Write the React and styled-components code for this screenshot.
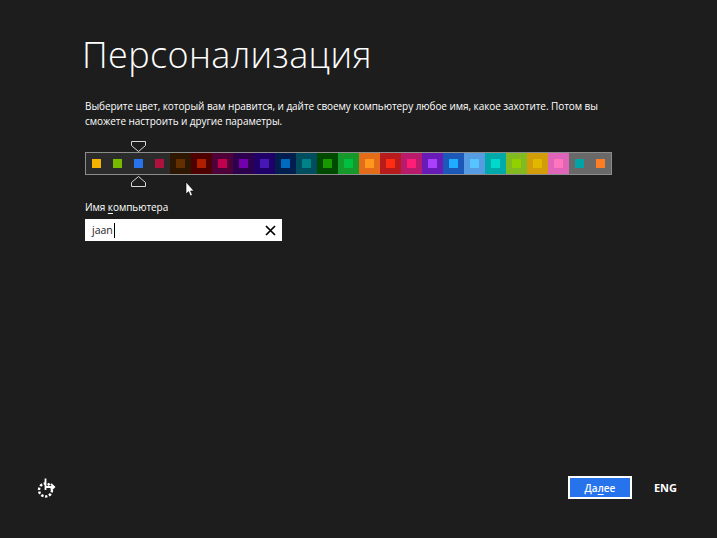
import React from "react";
import styled, { createGlobalStyle } from "styled-components";

const GlobalStyle = createGlobalStyle`
  html, body {
    margin: 0;
    padding: 0;
    background: #1d1d1d;
  }
`;

const SWATCHES = [
  { bg: "#2b2b2b", fg: "#f4b300" },
  { bg: "#2b2b2b", fg: "#78ba00" },
  { bg: "#2b2b2b", fg: "#2673ec", selected: true },
  { bg: "#2b2b2b", fg: "#ae113d" },
  { bg: "#2e1700", fg: "#632f00" },
  { bg: "#4e0000", fg: "#b01e00" },
  { bg: "#4e0038", fg: "#c1004f" },
  { bg: "#2d004e", fg: "#7200ac" },
  { bg: "#1f0068", fg: "#4617b4" },
  { bg: "#001e4e", fg: "#006ac1" },
  { bg: "#004d60", fg: "#008287" },
  { bg: "#004a00", fg: "#199900" },
  { bg: "#15992a", fg: "#00c13f" },
  { bg: "#e56c19", fg: "#ff981d" },
  { bg: "#b81b1b", fg: "#ff2e12" },
  { bg: "#b81b6c", fg: "#ff1d77" },
  { bg: "#691bb8", fg: "#aa40ff" },
  { bg: "#1b58b8", fg: "#1faeff" },
  { bg: "#569ce3", fg: "#56c5ff" },
  { bg: "#00aaaa", fg: "#00d8cc" },
  { bg: "#83ba1f", fg: "#91d100" },
  { bg: "#d39d09", fg: "#e1b700" },
  { bg: "#e064b7", fg: "#ff76bc" },
  { bg: "#696969", fg: "#00a4a4" },
  { bg: "#696969", fg: "#ff7d23" },
];

const Page = styled.div`
  box-sizing: border-box;
  width: 717px;
  height: 538px;
  display: flex;
  flex-direction: column;
  justify-content: space-between;
  padding: 33px 40px 39px 36px;
  background: #1d1d1d;
  color: #fff;
  font-family: "Open Sans", "Liberation Sans", sans-serif;
  overflow: hidden;
`;

const Content = styled.div`
  display: flex;
  flex-direction: column;
  padding-left: 49px;
`;

const Title = styled.h1`
  margin: 0 0 0 -3px;
  font-size: 36px;
  line-height: 44px;
  font-weight: 300;
  letter-spacing: 0.35px;
`;

const Intro = styled.p`
  margin: 22px 0 0;
  width: 530px;
  font-size: 10px;
  line-height: 15px;
  letter-spacing: -0.06px;
  color: #fff;
`;

const Picker = styled.div`
  position: relative;
  margin-top: 23px;
  width: 527px;
  box-sizing: border-box;
  display: flex;
  border: 1px solid #8c8c8c;
`;

const Swatch = styled.div`
  position: relative;
  width: 21px;
  height: 21px;
  display: flex;
  align-items: center;
  justify-content: center;
  background: ${(p) => p.$bg};
`;

const Chip = styled.span`
  width: 9px;
  height: 9px;
  background: ${(p) => p.$color};
`;

const Marker = styled.svg`
  position: absolute;
  left: 3px;
  ${(p) => (p.$below ? "top: 23px;" : "bottom: 22px;")}
  width: 15px;
  height: 11px;
`;

const Pointer = styled.svg`
  position: absolute;
  left: 99px;
  top: 29px;
  width: 10px;
  height: 15px;
`;

const Field = styled.div`
  display: flex;
  flex-direction: column;
  margin-top: 25px;
  width: 197px;
`;

const FieldLabel = styled.label`
  font-size: 10px;
  line-height: 15px;
  letter-spacing: -0.06px;
  color: #fff;
  u {
    text-underline-offset: 2px;
  }
`;

const InputBox = styled.div`
  margin-top: 4px;
  height: 22px;
  display: flex;
  align-items: center;
  justify-content: space-between;
  padding: 0 6px 0 7px;
  background: #fff;
  color: #1d1d1d;
  font-size: 10.5px;
`;

const TypedText = styled.span`
  display: inline-block;
  line-height: 15px;
  padding-right: 1px;
  border-right: 1px solid #000;
`;

const ClearIcon = styled.svg`
  width: 11px;
  height: 11px;
`;

const Footer = styled.div`
  display: flex;
  align-items: center;
  justify-content: space-between;
`;

const PowerIcon = styled.svg`
  width: 20px;
  height: 20px;
`;

const FooterRight = styled.div`
  display: flex;
  align-items: center;
  gap: 22px;
`;

const NextButton = styled.button`
  box-sizing: border-box;
  width: 64px;
  height: 23px;
  padding: 0;
  border: 2px solid #fff;
  background: #2673ec;
  color: #fff;
  font-family: inherit;
  font-size: 10px;
  font-weight: 600;
  u {
    text-underline-offset: 2px;
  }
`;

const Lang = styled.span`
  font-size: 11px;
  font-weight: 700;
`;

export default function App() {
  return (
    <>
      <GlobalStyle />
      <Page>
        <Content>
          <Title>Персонализация</Title>
          <Intro>
            Выберите цвет, который вам нравится, и дайте своему компьютеру любое имя, какое
            захотите. Потом вы сможете настроить и другие параметры.
          </Intro>
          <Picker>
            {SWATCHES.map((s, i) => (
              <Swatch key={i} $bg={s.bg}>
                <Chip $color={s.fg} />
                {s.selected && (
                  <>
                    <Marker viewBox="0 0 15 11">
                      <path d="M.5.5h14v4L7.5 10.5.5 4.5z" fill="none" stroke="#d8d8d8" strokeWidth="1" />
                    </Marker>
                    <Marker $below viewBox="0 0 15 11">
                      <path d="M.5 10.5h14v-4L7.5.5.5 6.5z" fill="none" stroke="#d8d8d8" strokeWidth="1" />
                    </Marker>
                  </>
                )}
              </Swatch>
            ))}
            <Pointer viewBox="0 0 10 15">
              <path d="M1 0v12l2.6-2.4L5.4 14l2-.9-1.8-4.2H9z" fill="#fff" stroke="#000" strokeWidth="0.6" />
            </Pointer>
          </Picker>
          <Field>
            <FieldLabel>
              Имя <u>к</u>омпьютера
            </FieldLabel>
            <InputBox>
              <TypedText>jaan</TypedText>
              <ClearIcon viewBox="0 0 11 11">
                <path d="M1 1l9 9M10 1l-9 9" stroke="#000" strokeWidth="1.7" fill="none" />
              </ClearIcon>
            </InputBox>
          </Field>
        </Content>
        <Footer>
          <PowerIcon viewBox="0 0 20 20">
            <circle cx="9.5" cy="12" r="6.5" fill="none" stroke="#fff" strokeWidth="2.4" strokeDasharray="2.4 1.6" />
            <path d="M9.5 0.5V12M9.5 9h8M15 6l3.2 3-3.2 3" fill="none" stroke="#fff" strokeWidth="1.8" />
          </PowerIcon>
          <FooterRight>
            <NextButton>
              Да<u>л</u>ее
            </NextButton>
            <Lang>ENG</Lang>
          </FooterRight>
        </Footer>
      </Page>
    </>
  );
}
